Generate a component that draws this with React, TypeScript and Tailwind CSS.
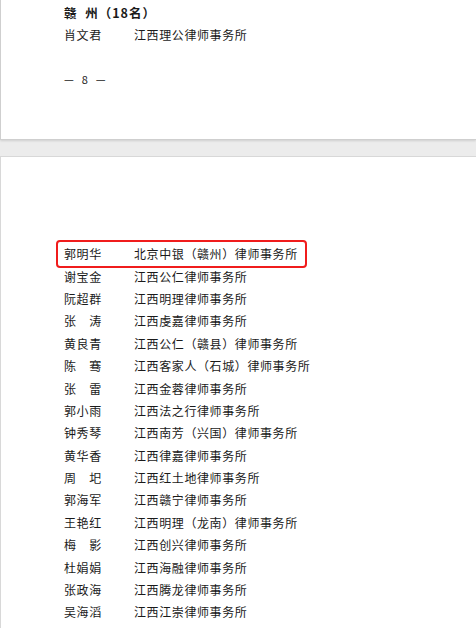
const rows: [string, string][] = [
  ['郭明华', '北京中银（赣州）律师事务所'],
  ['谢宝金', '江西公仁律师事务所'],
  ['阮超群', '江西明理律师事务所'],
  ['张　涛', '江西虔嘉律师事务所'],
  ['黄良青', '江西公仁（赣县）律师事务所'],
  ['陈　骞', '江西客家人（石城）律师事务所'],
  ['张　雷', '江西金蓉律师事务所'],
  ['郭小雨', '江西法之行律师事务所'],
  ['钟秀琴', '江西南芳（兴国）律师事务所'],
  ['黄华香', '江西律嘉律师事务所'],
  ['周　圯', '江西红土地律师事务所'],
  ['郭海军', '江西赣宁律师事务所'],
  ['王艳红', '江西明理（龙南）律师事务所'],
  ['梅　影', '江西创兴律师事务所'],
  ['杜娟娟', '江西海融律师事务所'],
  ['张政海', '江西腾龙律师事务所'],
  ['吴海滔', '江西江崇律师事务所'],
];

const font = { fontFamily: "'Noto Sans CJK SC', 'Noto Sans', sans-serif" };

function Row({ name, org }: { name: string; org: string }) {
  return (
    <div className="flex h-[22.4px] items-center text-[12px] tracking-[0.6px] text-[#1a1a1a]">
      <span className="w-[70px] shrink-0">{name}</span>
      <span>{org}</span>
    </div>
  );
}

export default function App() {
  return (
    <div className="min-h-[628px] w-[476px] overflow-hidden bg-[#ececec]" style={font}>
      <div className="h-[140px] border-b border-l border-[#cfcfcf] bg-white pl-[63px] pt-[2px] shadow-[0_1px_2px_rgba(0,0,0,0.12)]">
        <div className="flex h-[22px] items-center whitespace-pre text-[12.5px] font-bold tracking-[1px] text-[#1a1a1a]">
          赣  州（18名）
        </div>
        <Row name="肖文君" org="江西理公律师事务所" />
        <div className="mt-[22px] flex h-[22px] items-center whitespace-pre text-[11px] tracking-[1px] text-[#1a1a1a]">
          —  8  —
        </div>
      </div>
      <div className="mt-[16px] h-[472px] border-l border-t border-[#d8d8d8] bg-white pl-[63px] pt-[86px]">
        <div className="relative">
          <div className="pointer-events-none absolute -left-[8px] -top-[3.5px] h-[28px] w-[251px] rounded-[4px] border-[2.5px] border-[#f01c1c]" />
          <Row name={rows[0][0]} org={rows[0][1]} />
        </div>
        {rows.slice(1).map(([n, o]) => (
          <Row key={n + o} name={n} org={o} />
        ))}
      </div>
    </div>
  );
}
